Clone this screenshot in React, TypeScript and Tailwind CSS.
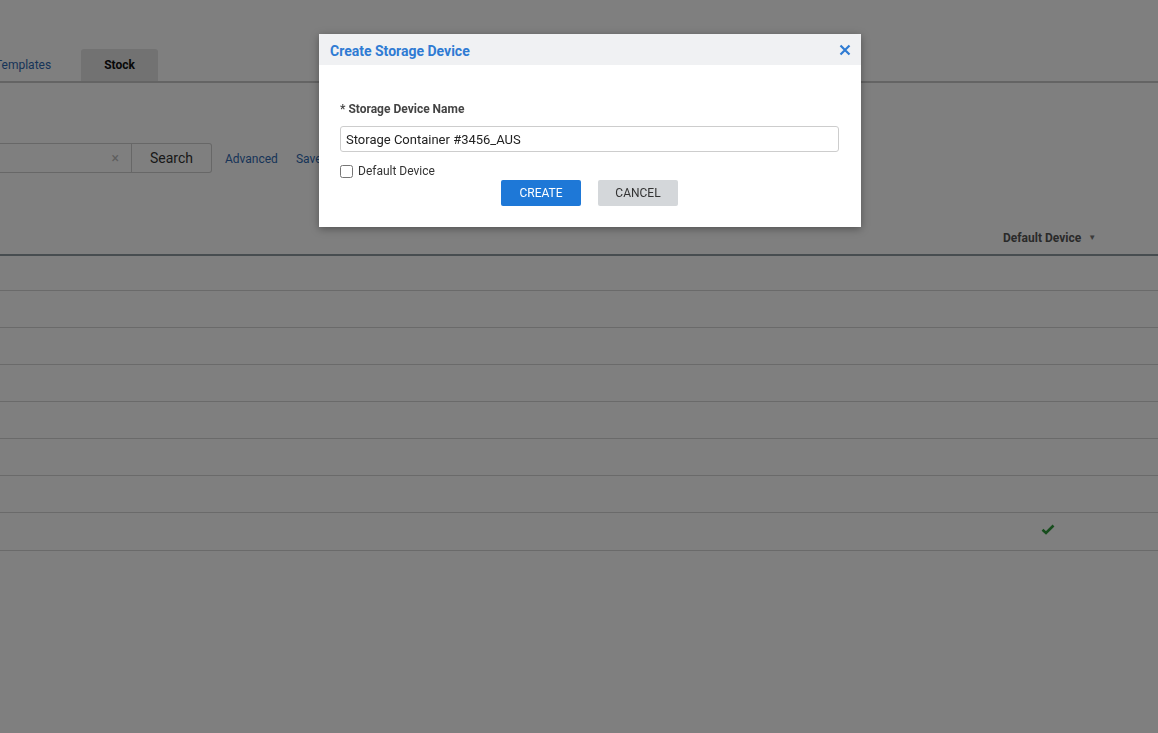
import { useState } from "react";

const rows = [0, 1, 2, 3, 4, 5, 6, 7];

function CheckIcon() {
  return (
    <svg width="14" height="11" viewBox="0 0 14 11" className="block -mt-[5px]">
      <path d="M1.5 5.8 L5 9 L12.5 1.5" fill="none" stroke="#2e9b3a" strokeWidth="2.6" />
    </svg>
  );
}

function StockPage() {
  return (
    <div className="w-full min-h-screen bg-white">
      {/* tabs */}
      <div className="pt-[50px] border-b-2 border-[#c9c9c9] flex items-end h-[83px]">
        <div className="w-[86px] h-[32px] flex items-center -ml-[5px] text-[12px] text-[#2f69b1]">
          Templates
        </div>
        <div className="w-[77px] h-[32px] flex items-center justify-center rounded-t-[3px] bg-[#e4e4e4] text-[12px] font-bold text-[#111]">
          Stock
        </div>
      </div>

      {/* search */}
      <div className="mt-[60px] flex items-center h-[30px]">
        <div className="w-[132px] h-[30px] border border-l-0 border-[#cfcfcf] flex items-center justify-end pr-[12px] text-[#bcbcbc] text-[14px]">
          ×
        </div>
        <div className="w-[80px] h-[30px] border border-l-0 border-[#cfcfcf] rounded-r-[3px] flex items-center justify-center text-[14px] text-[#333]">
          Search
        </div>
        <div className="ml-[13px] text-[12px] text-[#2f69b1] mt-[2px]">Advanced</div>
        <div className="ml-[18px] text-[12px] text-[#2f69b1] mt-[2px]">Save Search</div>
      </div>

      {/* table header */}
      <div className="mt-[52px] h-[31px] flex items-center border-b-2 border-[#8f9aa0]">
        <div className="flex-1" />
        <div className="w-[155px] pb-[4px] flex items-center text-[12px] font-bold text-[#555]">
          Default Device
          <span className="ml-[7px] text-[8px] text-[#777]">▼</span>
        </div>
      </div>

      {rows.map((r) => (
        <div
          key={r}
          className={`${r === 0 ? "h-[35px]" : r === 7 ? "h-[38px]" : "h-[37px]"} flex items-center border-b border-[#d5d5d5]`}
        >
          <div className="flex-1" />
          <div className="w-[155px] pl-[38px]">{r === 7 && <CheckIcon />}</div>
        </div>
      ))}
    </div>
  );
}

export default function App() {
  const [name, setName] = useState("Storage Container #3456_AUS");
  const [isDefault, setIsDefault] = useState(false);

  return (
    <div
      className="relative w-full min-h-screen overflow-hidden"
      style={{ fontFamily: "Roboto, 'Liberation Sans', sans-serif" }}
    >
      <StockPage />
      <div className="fixed inset-0 bg-black/50" />

      <div className="absolute left-[319px] top-[34px] w-[542px] h-[193px] bg-white shadow-[0_2px_8px_rgba(0,0,0,0.35)]">
        <div className="h-[31px] bg-[#f0f1f3] flex items-center justify-between pl-[11px] pr-[10px] pt-[3px]">
          <div className="text-[14px] font-bold text-[#2f7bd3]">Create Storage Device</div>
          <svg width="12" height="12" viewBox="0 0 12 12" className="-mt-[3px]">
            <path d="M1.5 1.5 L10.5 10.5 M10.5 1.5 L1.5 10.5" stroke="#2f7bd3" strokeWidth="2.2" />
          </svg>
        </div>
        <div className="px-[21px] pt-[37px]">
          <div className="text-[12px] font-bold text-[#444] leading-[14px]">* Storage Device Name</div>
          <input
            value={name}
            onChange={(e) => setName(e.target.value)}
            className="mt-[10px] w-[499px] h-[26px] border border-[#cdcdcd] rounded-[3px] px-[5px] text-[13px] text-[#222] outline-none"
          />
          <label className="mt-[12px] flex items-center gap-[5px] text-[12px] text-[#333] leading-[14px]">
            <input
              type="checkbox"
              checked={isDefault}
              onChange={(e) => setIsDefault(e.target.checked)}
              className="w-[13px] h-[13px] m-0"
            />
            Default Device
          </label>
          <div className="mt-[2px] flex justify-center gap-[17px] -ml-[1px]">
            <button className="w-[80px] h-[26px] rounded-[2px] bg-[#1e78d7] text-white text-[12px]">CREATE</button>
            <button className="w-[80px] h-[26px] rounded-[2px] bg-[#d4d7da] text-[#333] text-[12px]">CANCEL</button>
          </div>
        </div>
      </div>
    </div>
  );
}
